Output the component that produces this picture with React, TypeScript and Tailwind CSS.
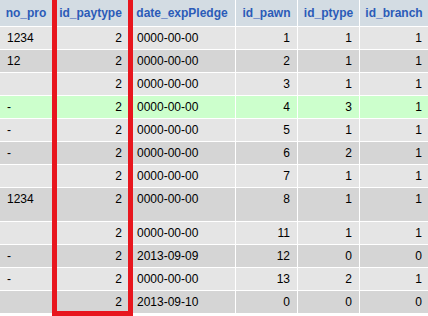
import React from "react";

const cols = "grid grid-cols-[52px_75px_106px_61px_61px_68px] gap-x-px";

type Row = { np: string; pt: string; date: string; pawn: string; ptype: string; br: string; bg: string; tall?: boolean };

const rows: Row[] = [
  { np: "1234", pt: "2", date: "0000-00-00", pawn: "1", ptype: "1", br: "1", bg: "bg-[#e5e5e5]" },
  { np: "12", pt: "2", date: "0000-00-00", pawn: "2", ptype: "1", br: "1", bg: "bg-[#d5d5d5]" },
  { np: "", pt: "2", date: "0000-00-00", pawn: "3", ptype: "1", br: "1", bg: "bg-[#e5e5e5]" },
  { np: "-", pt: "2", date: "0000-00-00", pawn: "4", ptype: "3", br: "1", bg: "bg-[#ccffcc]" },
  { np: "-", pt: "2", date: "0000-00-00", pawn: "5", ptype: "1", br: "1", bg: "bg-[#e5e5e5]" },
  { np: "-", pt: "2", date: "0000-00-00", pawn: "6", ptype: "2", br: "1", bg: "bg-[#d5d5d5]" },
  { np: "", pt: "2", date: "0000-00-00", pawn: "7", ptype: "1", br: "1", bg: "bg-[#e5e5e5]" },
  { np: "1234", pt: "2", date: "0000-00-00", pawn: "8", ptype: "1", br: "1", bg: "bg-[#d5d5d5]", tall: true },
  { np: "", pt: "2", date: "0000-00-00", pawn: "11", ptype: "1", br: "1", bg: "bg-[#e5e5e5]" },
  { np: "-", pt: "2", date: "2013-09-09", pawn: "12", ptype: "0", br: "0", bg: "bg-[#d5d5d5]" },
  { np: "-", pt: "2", date: "0000-00-00", pawn: "13", ptype: "2", br: "1", bg: "bg-[#e5e5e5]" },
  { np: "", pt: "2", date: "2013-09-10", pawn: "0", ptype: "0", br: "0", bg: "bg-[#d5d5d5]" },
];

const headers = ["no_pro", "id_paytype", "date_expPledge", "id_pawn", "id_ptype", "id_branch"];

export default function App() {
  return (
    <div
      className="relative w-[428px] h-[316px] overflow-hidden bg-white text-[12px] text-[#000]"
      style={{ fontFamily: '"Liberation Sans", Arial, sans-serif' }}
    >
      <div className="flex flex-col gap-y-px">
        <div className={`${cols} h-[26px]`}>
          {headers.map((h) => (
            <div
              key={h}
              className="bg-[#d3dce3] text-center font-bold text-[#2b5bb8] leading-[26px] whitespace-nowrap overflow-hidden"
            >
              {h}
            </div>
          ))}
        </div>
        {rows.map((r, i) => (
          <div key={i} className={`${cols} ${r.tall ? "h-[33px]" : "h-[22px]"}`}>
            <div className={`${r.bg} pl-[7px] leading-[22px]`}>{r.np}</div>
            <div className={`${r.bg} pr-[6px] text-right leading-[22px]`}>{r.pt}</div>
            <div className={`${r.bg} pl-[8px] leading-[22px]`}>{r.date}</div>
            <div className={`${r.bg} pr-[7px] text-right leading-[22px]`}>{r.pawn}</div>
            <div className={`${r.bg} pr-[7px] text-right leading-[22px]`}>{r.ptype}</div>
            <div className={`${r.bg} pr-[6px] text-right leading-[22px]`}>{r.br}</div>
          </div>
        ))}
      </div>
      <div className="absolute left-[52px] top-[-10px] w-[81px] h-[326px] border-[5px] border-[#e8161e]" />
    </div>
  );
}
